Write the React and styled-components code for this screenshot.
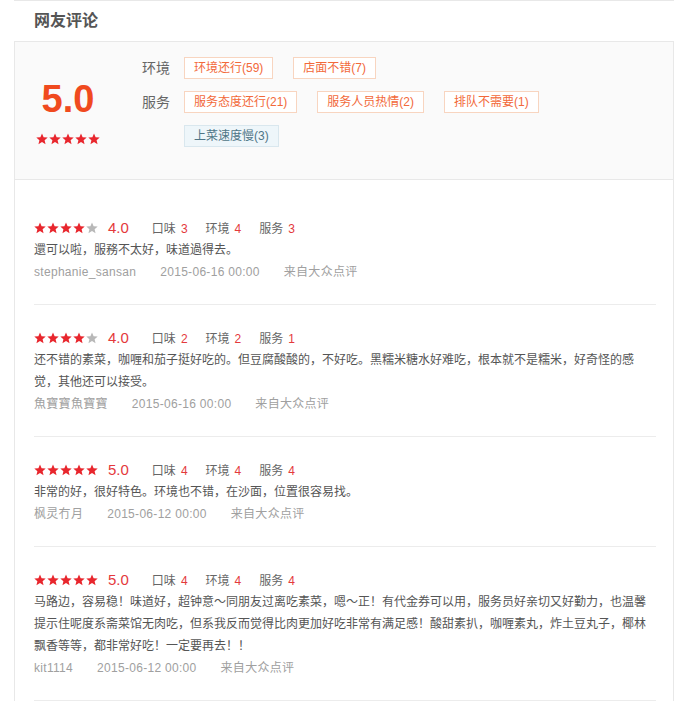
import React from 'react'
import styled, { createGlobalStyle } from 'styled-components'

const GlobalStyle = createGlobalStyle`
  body {
    margin: 0;
    background: #fff;
    font-family: "Liberation Sans", "Noto Sans CJK SC", sans-serif;
    font-size: 12px;
    color: #555;
  }
`

const summary = {
  score: '5.0',
  groups: [
    { label: '环境', tags: ['环境还行(59)', '店面不错(7)'] },
    { label: '服务', tags: ['服务态度还行(21)', '服务人员热情(2)', '排队不需要(1)'] },
    { label: '', tags: ['上菜速度慢(3)'], muted: true }
  ]
}

const reviews = [
  {
    stars: 4, score: '4.0', taste: 3, env: 4, service: 3,
    text: '還可以啦，服務不太好，味道過得去。',
    user: 'stephanie_sansan', date: '2015-06-16 00:00'
  },
  {
    stars: 4, score: '4.0', taste: 2, env: 2, service: 1,
    text: '还不错的素菜，咖喱和茄子挺好吃的。但豆腐酸酸的，不好吃。黑糯米糖水好难吃，根本就不是糯米，好奇怪的感觉，其他还可以接受。',
    user: '魚寶寶魚寶寶', date: '2015-06-16 00:00'
  },
  {
    stars: 5, score: '5.0', taste: 4, env: 4, service: 4,
    text: '非常的好，很好特色。环境也不错，在沙面，位置很容易找。',
    user: '枫灵冇月', date: '2015-06-12 00:00'
  },
  {
    stars: 5, score: '5.0', taste: 4, env: 4, service: 4,
    text: '马路边，容易稳！味道好，超钟意～同朋友过离吃素菜，嗯～正！有代金券可以用，服务员好亲切又好勤力，也温馨提示住呢度系斋菜馆无肉吃，但系我反而觉得比肉更加好吃非常有满足感！酸甜素扒，咖喱素丸，炸土豆丸子，椰林飘香等等，都非常好吃！一定要再去！！',
    user: 'kit1114', date: '2015-06-12 00:00'
  }
]

const Page = styled.div`
  width: 660px;
  margin-left: 14px;
  box-sizing: border-box;
`

const Header = styled.h2`
  margin: 0;
  height: 40px;
  line-height: 40px;
  padding-left: 20px;
  border-top: 1px solid #e8e8e8;
  font-size: 16px;
  font-weight: bold;
  color: #555;
`

const Body = styled.div`
  border: 1px solid #e8e8e8;
  border-bottom: none;
`

const Summary = styled.div`
  display: flex;
  background: #fafafa;
  border-bottom: 1px solid #e8e8e8;
  padding: 15px 0 32px;
`

const ScoreBlock = styled.div`
  width: 106px;
  padding-top: 23px;
  text-align: center;
`

const BigScore = styled.div`
  font-size: 38px;
  line-height: 38px;
  font-weight: bold;
  color: #f04a1e;
`

const StarRow = styled.div`
  display: flex;
  gap: 1px;
  justify-content: ${props => props.center ? 'center' : 'flex-start'};
  margin-top: ${props => props.center ? '15px' : '0'};
`

const StarIcon = styled.svg`
  width: 12px;
  height: 12px;
  display: block;
  fill: ${props => props.on ? '#e8262d' : '#b8b8b8'};
`

const TagGroups = styled.div`
  margin-left: 21px;
`

const TagRow = styled.div`
  display: flex;
  align-items: center;
  margin-bottom: 12px;

  &:last-child {
    margin-bottom: 0;
  }
`

const GroupLabel = styled.span`
  width: 42px;
  flex-shrink: 0;
  font-size: 14px;
  line-height: 22px;
  color: #666;
`

const Tag = styled.span`
  box-sizing: border-box;
  height: 22px;
  line-height: 20px;
  padding: 0 9px;
  margin-right: 20px;
  font-size: 12px;
  white-space: nowrap;
  border: 1px solid ${props => props.muted ? '#d9e7ee' : '#f8d5c0'};
  background: ${props => props.muted ? '#eef6fa' : '#fff'};
  color: ${props => props.muted ? '#4f7586' : '#f2693a'};
`

const List = styled.div`
  padding: 15px 17px 0 19px;
`

const Review = styled.div`
  padding: 21px 0;
  border-bottom: 1px solid #ececec;
`

const RatingLine = styled.div`
  display: flex;
  align-items: center;
  height: 23px;
`

const Score = styled.span`
  margin-left: 10px;
  margin-right: 23px;
  font-size: 15px;
  color: #e4393c;
`

const SubRating = styled.span`
  margin-right: 18px;
  color: #666;

  b {
    font-weight: normal;
    margin-left: 5px;
    color: #e4393c;
  }
`

const Content = styled.p`
  margin: 0;
  line-height: 22px;
  color: #555;
`

const Meta = styled.div`
  display: flex;
  line-height: 22px;
  color: #a0a0a0;
  letter-spacing: 0.3px;

  span {
    margin-right: 24px;
  }
`

const Star = ({ on }) => (
  <StarIcon on={on ? 1 : 0} viewBox="0 0 24 24">
    <polygon points="12,0.8 15.2,8.3 23.4,9 17.2,14.4 19.1,22.5 12,18.2 4.9,22.5 6.8,14.4 0.6,9 8.8,8.3" />
  </StarIcon>
)

const Stars = ({ count, center }) => (
  <StarRow center={center}>
    {[0, 1, 2, 3, 4].map(i => <Star key={i} on={i < count} />)}
  </StarRow>
)

export default function App() {
  return (
    <Page>
      <GlobalStyle />
      <Header>网友评论</Header>
      <Body>
        <Summary>
          <ScoreBlock>
            <BigScore>{summary.score}</BigScore>
            <Stars count={5} center />
          </ScoreBlock>
          <TagGroups>
            {summary.groups.map((g, i) => (
              <TagRow key={i}>
                <GroupLabel>{g.label}</GroupLabel>
                {g.tags.map(t => <Tag key={t} muted={g.muted}>{t}</Tag>)}
              </TagRow>
            ))}
          </TagGroups>
        </Summary>
        <List>
          {reviews.map((r, i) => (
            <Review key={i}>
              <RatingLine>
                <Stars count={r.stars} />
                <Score>{r.score}</Score>
                <SubRating>口味<b>{r.taste}</b></SubRating>
                <SubRating>环境<b>{r.env}</b></SubRating>
                <SubRating>服务<b>{r.service}</b></SubRating>
              </RatingLine>
              <Content>{r.text}</Content>
              <Meta>
                <span>{r.user}</span>
                <span>{r.date}</span>
                <span>来自大众点评</span>
              </Meta>
            </Review>
          ))}
        </List>
      </Body>
    </Page>
  )
}
